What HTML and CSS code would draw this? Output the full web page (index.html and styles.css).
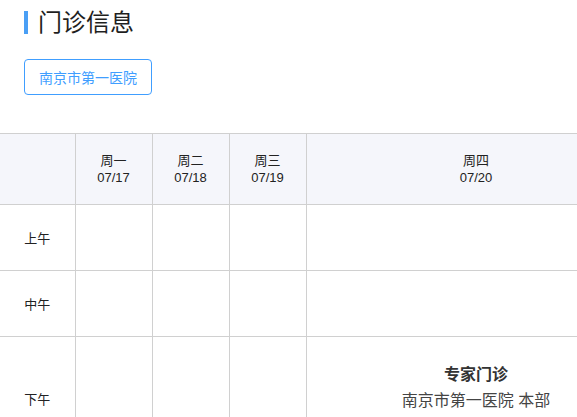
FILE: index.html
```html
<!DOCTYPE html>
<html lang="zh">
<head>
<meta charset="utf-8">
<link rel="stylesheet" href="styles.css">
</head>
<body>
<div class="page">
  <div class="head">
    <div class="title"><span class="bar"></span><h1>门诊信息</h1></div>
    <button class="hosp">南京市第一医院</button>
  </div>
  <div class="wrap">
    <table class="sched">
      <colgroup>
        <col class="c0"><col class="c1"><col class="c1"><col class="c1"><col class="c4">
      </colgroup>
      <thead>
        <tr>
          <th></th>
          <th>周一<br>07/17</th>
          <th>周二<br>07/18</th>
          <th>周三<br>07/19</th>
          <th>周四<br>07/20</th>
        </tr>
      </thead>
      <tbody>
        <tr class="r"><td class="lbl">上午</td><td></td><td></td><td></td><td></td></tr>
        <tr class="r"><td class="lbl">中午</td><td></td><td></td><td></td><td></td></tr>
        <tr class="r last"><td class="lbl">下午</td><td></td><td></td><td></td>
          <td class="slot"><div class="t">专家门诊</div><div class="s">南京市第一医院 本部</div></td></tr>
      </tbody>
    </table>
  </div>
</div>
</body>
</html>
```
FILE: styles.css
```css
html, body { margin: 0; padding: 0; background: #fff; overflow: hidden; }
body { font-family: "Liberation Sans", "Noto Sans CJK SC", sans-serif; color: #222; }
.page { width: 577px; height: 417px; overflow: hidden; }
.head { padding: 10px 0 0 24px; }
.title { display: flex; align-items: center; height: 25px; }
.bar { width: 4px; height: 23px; background: #4a9ff5; margin-right: 10px; }
.title h1 { margin: 0; font-size: 24px; font-weight: normal; line-height: 25px; color: #1f1f1f; }
.hosp {
  display: block; margin-top: 24px; height: 36px; width: 128px; padding: 0;
  background: #fff; border: 1px solid #409eff; border-radius: 4px;
  color: #409eff; font-family: inherit; font-size: 14px; cursor: pointer;
}
.wrap { margin-top: 38px; width: 577px; overflow: hidden; }
.sched { table-layout: fixed; width: 646px; border-collapse: collapse; }
.c0 { width: 75px; }
.c1 { width: 77px; }
.c4 { width: 340px; }
.sched th, .sched td { border: 1px solid #d0d0d0; text-align: center; padding: 0; }
.sched tr > :first-child { border-left: none; }
.sched th { background: #f5f6fb; font-weight: normal; font-size: 13px; line-height: 17px; height: 70px; color: #222; }
.sched td { height: 65px; font-size: 13px; color: #222; }
.sched tr.last td { height: 123px; }
.sched tr.last td.slot { vertical-align: top; padding-top: 25px; height: 98px; }
.slot .t { font-size: 16px; font-weight: bold; line-height: 26px; color: #333; }
.slot .s { font-size: 16px; line-height: 26px; color: #444; }
```
